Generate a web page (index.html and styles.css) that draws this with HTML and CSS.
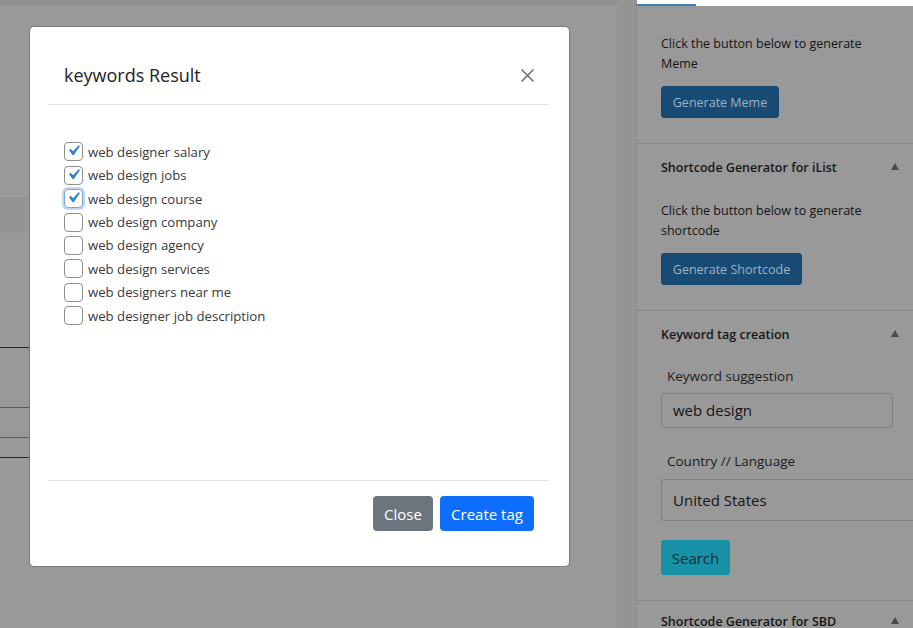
FILE: index.html
```html
<!DOCTYPE html>
<html lang="en">
<head>
<meta charset="utf-8">
<title>keywords Result</title>
<link rel="stylesheet" href="styles.css">
</head>
<body>
<div class="page">
  <main class="main">
    <div class="topstrip"></div>
    <div class="band"></div>
    <div class="rule rule-a"></div>
    <div class="rule rule-b"></div>
    <div class="rule rule-c"></div>
    <div class="rule rule-d"></div>
  </main>
  <div class="gutter"></div>
  <aside class="sidebar">
    <div class="tabs"><span class="tab-active"></span></div>
    <section class="box box-first">
      <div class="box-body">
        <p class="desc">Click the button below to generate Meme</p>
        <button class="wpbtn wpbtn-meme">Generate Meme</button>
      </div>
    </section>
    <section class="box">
      <div class="box-head"><span>Shortcode Generator for iList</span><span class="tri"></span></div>
      <div class="box-body">
        <p class="desc">Click the button below to generate shortcode</p>
        <button class="wpbtn wpbtn-short">Generate Shortcode</button>
      </div>
    </section>
    <section class="box">
      <div class="box-head"><span>Keyword tag creation</span><span class="tri"></span></div>
      <div class="box-body form">
        <label class="flabel">Keyword suggestion</label>
        <div class="finput">web design</div>
        <label class="flabel flabel-2">Country // Language</label>
        <div class="fselect">United States</div>
        <button class="searchbtn">Search</button>
      </div>
    </section>
    <section class="box box-last">
      <div class="box-head box-head-last"><span>Shortcode Generator for SBD</span><span class="tri"></span></div>
    </section>
  </aside>

  <div class="modal">
    <div class="modal-header">
      <h5 class="modal-title">keywords Result</h5>
      <svg class="modal-close" width="13" height="13" viewBox="0 0 13 13"><path d="M0.5 0.5 L12.5 12.5 M12.5 0.5 L0.5 12.5" stroke="#6b6b6b" stroke-width="1.5" fill="none"/></svg>
    </div>
    <div class="modal-body">
      <ul class="kwlist">
        <li><span class="cb checked"><svg viewBox="0 0 20 20"><path d="M14.83 4.89l1.34.94-5.81 8.38H9.02L5.78 9.67l1.34-1.25 2.57 2.4z"/></svg></span>web designer salary</li>
        <li><span class="cb checked"><svg viewBox="0 0 20 20"><path d="M14.83 4.89l1.34.94-5.81 8.38H9.02L5.78 9.67l1.34-1.25 2.57 2.4z"/></svg></span>web design jobs</li>
        <li><span class="cb checked focus"><svg viewBox="0 0 20 20"><path d="M14.83 4.89l1.34.94-5.81 8.38H9.02L5.78 9.67l1.34-1.25 2.57 2.4z"/></svg></span>web design course</li>
        <li><span class="cb"></span>web design company</li>
        <li><span class="cb"></span>web design agency</li>
        <li><span class="cb"></span>web design services</li>
        <li><span class="cb"></span>web designers near me</li>
        <li><span class="cb"></span>web designer job description</li>
      </ul>
    </div>
    <div class="modal-footer">
      <button class="bbtn bbtn-secondary">Close</button>
      <button class="bbtn bbtn-primary">Create tag</button>
    </div>
  </div>
</div>
</body>
</html>
```

FILE: styles.css
```css
* { box-sizing: border-box; }
html, body { margin: 0; padding: 0; }
body {
  width: 913px;
  height: 628px;
  overflow: hidden;
  background: #999999;
  font-family: "Open Sans", "Noto Sans", sans-serif;
}
.page {
  position: relative;
  display: flex;
  width: 913px;
  height: 628px;
}

/* dimmed main editor area */
.main {
  width: 617px;
  flex: none;
  background: #999999;
}
.topstrip { height: 6px; background: #8f8f8f; }
.band {
  margin-top: 190px;
  height: 38px;
  width: 300px;
  background: #949494;
  border-top: 1px solid #9e9e9e;
  border-bottom: 1px solid #9e9e9e;
}
.rule { width: 300px; height: 1px; }
.rule-a { margin-top: 113px; background: #262626; }
.rule-b { margin-top: 59px; background: #5a5a5a; }
.rule-c { margin-top: 29px; background: #5a5a5a; }
.rule-d { margin-top: 19px; background: #262626; }

.gutter {
  width: 20px;
  flex: none;
  background: #949494;
  border-right: 1px solid #8a8a8a;
}

/* sidebar */
.sidebar {
  width: 276px;
  flex: none;
  background: #999999;
  color: #141414;
  font-size: 12.5px;
}
.tabs {
  height: 6px;
  background: #ffffff;
  position: relative;
}
.tab-active {
  display: block;
  width: 59px;
  height: 2px;
  position: absolute;
  left: 0;
  bottom: 0;
  background: #3b80bb;
}
.box {
  border-bottom: 1px solid #898989;
}
.box-last { border-bottom: none; }
.box-first .box-body { padding-top: 28px; }
.box-head {
  height: 47px;
  padding: 0 14px 0 24px;
  display: flex;
  align-items: center;
  justify-content: space-between;
  font-weight: 600;
  font-size: 12.5px;
  color: #161616;
}
.box-head-last { height: 41px; }
.tri {
  width: 0;
  height: 0;
  border-left: 4.5px solid transparent;
  border-right: 4.5px solid transparent;
  border-bottom: 7px solid #4a4a4a;
  margin-top: -2px;
}
.box-body {
  padding: 10px 24px 25px 24px;
}
.desc {
  margin: 0 0 12px 0;
  line-height: 20px;
  width: 215px;
}
.wpbtn {
  display: block;
  height: 32px;
  padding: 0;
  border: 1px solid #174a72;
  border-radius: 3px;
  background: #174b74;
  color: #9db3c7;
  font-family: inherit;
  font-size: 12.5px;
  white-space: nowrap;
}
.wpbtn-meme { width: 118px; }
.wpbtn-short { width: 141px; }

.form { padding-top: 8px; padding-bottom: 25px; padding-right: 0; }
.flabel {
  display: block;
  padding-left: 6px;
  line-height: 20px;
  font-size: 13.5px;
  color: #1c1c1c;
}
.finput {
  margin-top: 7px;
  width: 232px;
  height: 35px;
  border: 1px solid #7f7f7f;
  border-radius: 4px;
  padding: 0 11px;
  line-height: 33px;
  font-size: 15px;
  color: #141414;
}
.flabel-2 { margin-top: 23px; }
.fselect {
  margin-top: 8px;
  width: 260px;
  height: 42px;
  border: 1px solid #7f7f7f;
  border-right: none;
  border-radius: 4px 0 0 4px;
  padding: 0 11px;
  line-height: 40px;
  font-size: 15px;
  color: #141414;
}
.searchbtn {
  display: block;
  margin-top: 19px;
  width: 69px;
  height: 35px;
  border: none;
  border-radius: 3px;
  background: #1791a6;
  color: #0b2d33;
  font-family: inherit;
  font-size: 15px;
  padding: 0;
}

/* modal (lies over the page) */
.modal {
  position: absolute;
  left: 29px;
  top: 26px;
  width: 541px;
  height: 541px;
  background: #ffffff;
  border: 1px solid #7b7b7b;
  border-radius: 5px;
  padding: 0 20px 0 19px;
  display: flex;
  flex-direction: column;
  color: #212529;
}
.modal-header {
  display: flex;
  align-items: center;
  justify-content: space-between;
  padding: 33px 15px 14px 15px;
  border-bottom: 1px solid #e3e3e3;
}
.modal-title {
  margin: 0;
  font-size: 18px;
  font-weight: 400;
  line-height: 30px;
  color: #222;
}
.modal-close { display: block; }
.modal-body {
  flex: 1;
  padding: 35px 15px 0 15px;
  border-bottom: 1px solid #e3e3e3;
}
.kwlist {
  list-style: none;
  margin: 0;
  padding: 0;
}
.kwlist li {
  display: flex;
  align-items: center;
  height: 23.45px;
  font-size: 13.2px;
  color: #3a3a3a;
}
.cb {
  position: relative;
  flex: none;
  width: 19px;
  height: 19px;
  margin-right: 5px;
  border: 1px solid #8c8f94;
  border-radius: 4px;
  background: #fff;
}
.cb svg {
  position: absolute;
  left: -2px;
  top: -3px;
  width: 21px;
  height: 21px;
  fill: #3582c4;
}
.cb.focus {
  border-color: #7ea6d6;
  box-shadow: 0 0 0 2px #c2d7f2;
}
.modal-footer {
  height: 85px;
  flex: none;
  display: flex;
  justify-content: flex-end;
  align-items: flex-start;
  gap: 7px;
  padding: 15px 15px 0 0;
}
.bbtn {
  height: 35px;
  border: none;
  border-radius: 4px;
  color: #fff;
  font-family: inherit;
  font-size: 15px;
  padding: 0;
}
.bbtn-secondary { width: 60px; background: #6c757d; }
.bbtn-primary { width: 94px; background: #0d6efd; }
```
